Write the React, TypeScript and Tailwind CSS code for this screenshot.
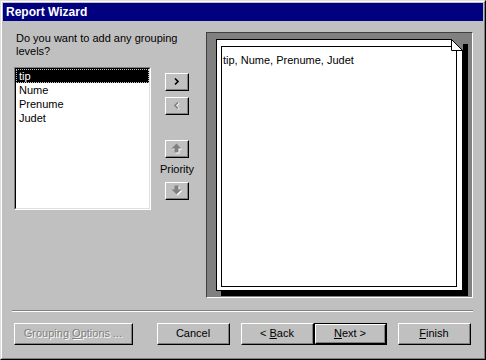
import React from "react"

const font = "font-['Liberation_Sans',Arial,sans-serif]"

function Btn({
  children,
  className = "",
  isDefault = false,
}: {
  children: React.ReactNode
  className?: string
  isDefault?: boolean
}) {
  return (
    <div className={`${className} ${isDefault ? "border border-black" : ""} bg-[#c0c0c0]`}>
      <div className="h-full border border-t-white border-l-white border-r-black border-b-black">
        <div className="h-full border-r border-b border-[#808080] flex items-center justify-center text-[11px] text-black">
          {children}
        </div>
      </div>
    </div>
  )
}

function ChevronRight({ disabled = false }: { disabled?: boolean }) {
  return (
    <svg width="6" height="8" viewBox="0 0 6 8">
      {disabled && <path d="M2 1 L5 4 L2 7" fill="none" stroke="#fff" strokeWidth="1.6" />}
      <path d="M1 0.5 L4 3.5 L1 6.5" fill="none" stroke={disabled ? "#808080" : "#000"} strokeWidth="1.6" />
    </svg>
  )
}

function ChevronLeft({ disabled = false }: { disabled?: boolean }) {
  return (
    <svg width="6" height="8" viewBox="0 0 6 8">
      {disabled && <path d="M5 1 L2 4 L5 7" fill="none" stroke="#fff" strokeWidth="1.6" />}
      <path d="M4 0.5 L1 3.5 L4 6.5" fill="none" stroke={disabled ? "#808080" : "#000"} strokeWidth="1.6" />
    </svg>
  )
}

function BlockArrow({ down = false }: { down?: boolean }) {
  const up = "M5 0 L10 5 L7 5 L7 9 L3 9 L3 5 L0 5 Z"
  const dn = "M5 9 L10 4 L7 4 L7 0 L3 0 L3 4 L0 4 Z"
  return (
    <svg width="12" height="11" viewBox="0 0 12 11">
      <path d={down ? dn : up} transform="translate(1.5 1.5)" fill="#fff" />
      <path d={down ? dn : up} transform="translate(0.5 0.5)" fill="#808080" />
    </svg>
  )
}

const fields = ["tip", "Nume", "Prenume", "Judet"]

export default function App() {
  return (
    <div className={`w-[486px] h-[360px] bg-[#c0c0c0] ${font} overflow-hidden`}>
      <div className="h-full border border-t-[#dfdfdf] border-l-[#dfdfdf] border-r-black border-b-black">
        <div className="h-full border border-t-white border-l-white border-r-[#808080] border-b-[#808080] p-[1px] flex flex-col">
          {/* Title bar */}
          <div className="h-[18px] bg-[#000080] flex items-center pl-[3px]">
            <span className="text-white text-[12px] font-bold leading-none">Report Wizard</span>
          </div>

          {/* Body */}
          <div className="flex pl-[11px] mt-[11px]">
            <div className="w-[137px] flex flex-col">
              <p className="pl-[2px] text-[11px] leading-[13px] text-black whitespace-nowrap">
                Do you want to add any grouping
                <br />
                levels?
              </p>
              <div className="mt-[9px] h-[143px] border border-t-[#808080] border-l-[#808080] border-r-white border-b-white">
                <div className="h-full border border-t-black border-l-black border-r-[#dfdfdf] border-b-[#dfdfdf] bg-white">
                  {fields.map((f, i) => (
                    <div
                      key={f}
                      className={`h-[14px] px-[2px] text-[11px] leading-[12px] ${
                        i === 0
                          ? "bg-black text-white border border-dotted border-[#c0c0c0]"
                          : "text-black border border-transparent"
                      }`}
                    >
                      {f}
                    </div>
                  ))}
                </div>
              </div>
            </div>

            <div className="w-[24px] ml-[14px] flex flex-col items-center">
              <Btn className="w-[24px] h-[18px] mt-[41px]">
                <ChevronRight />
              </Btn>
              <Btn className="w-[24px] h-[18px] mt-[6px]">
                <ChevronLeft disabled />
              </Btn>
              <Btn className="w-[24px] h-[18px] mt-[25px]">
                <BlockArrow />
              </Btn>
              <span className="mt-[3px] text-[11px] leading-[16px] text-black whitespace-nowrap">Priority</span>
              <Btn className="w-[24px] h-[18px] mt-[5px]">
                <BlockArrow down />
              </Btn>
            </div>

            {/* Preview panel */}
            <div className="ml-[17px] w-[267px] h-[266px] bg-[#808080] border border-t-[#404040] border-l-[#404040] border-r-white border-b-white pt-[6px] pl-[9px]">
              <div className="relative w-[247px] h-[252px] bg-white border border-black shadow-[5px_5px_0_#000] pt-[6px] pl-[4px] pr-[5px] pb-[3px] flex flex-col">
                <div className="flex-1 border border-black pl-[1px]">
                  <span className="text-[11px] leading-[12px] text-black">tip, Nume, Prenume, Judet</span>
                </div>
                <svg
                  className="absolute -top-[1px] -right-[1px]"
                  width="12"
                  height="12"
                  viewBox="0 0 12 12"
                >
                  <path d="M0 0 L12 0 L12 12 Z" fill="#808080" />
                  <path d="M0.5 0.5 L0.5 11.5 L11.5 11.5 Z" fill="#fff" />
                  <path d="M0.5 0 L0.5 11.5 L12 11.5 M0.5 0.5 L11.5 11.5" fill="none" stroke="#000" strokeWidth="1" />
                </svg>
              </div>
            </div>
          </div>

          {/* Separator */}
          <div className="mt-[12px] ml-[9px] w-[461px] border-t border-t-[#808080] border-b border-b-white" />

          {/* Buttons */}
          <div className="flex pl-[11px] mt-[11px]">
            <Btn className="w-[119px] h-[22px]">
              <span className="text-[#808080] [text-shadow:1px_1px_0_#fff]">
                Grouping <u>O</u>ptions ...
              </span>
            </Btn>
            <Btn className="w-[73px] h-[22px] ml-[24px]">Cancel</Btn>
            <Btn className="w-[73px] h-[22px] ml-[11px]">
              <span>
                &lt; <u>B</u>ack
              </span>
            </Btn>
            <Btn className="w-[73px] h-[22px]" isDefault>
              <span>
                <u>N</u>ext &gt;
              </span>
            </Btn>
            <Btn className="w-[73px] h-[22px] ml-[11px]">
              <span>
                <u>F</u>inish
              </span>
            </Btn>
          </div>
        </div>
      </div>
    </div>
  )
}
